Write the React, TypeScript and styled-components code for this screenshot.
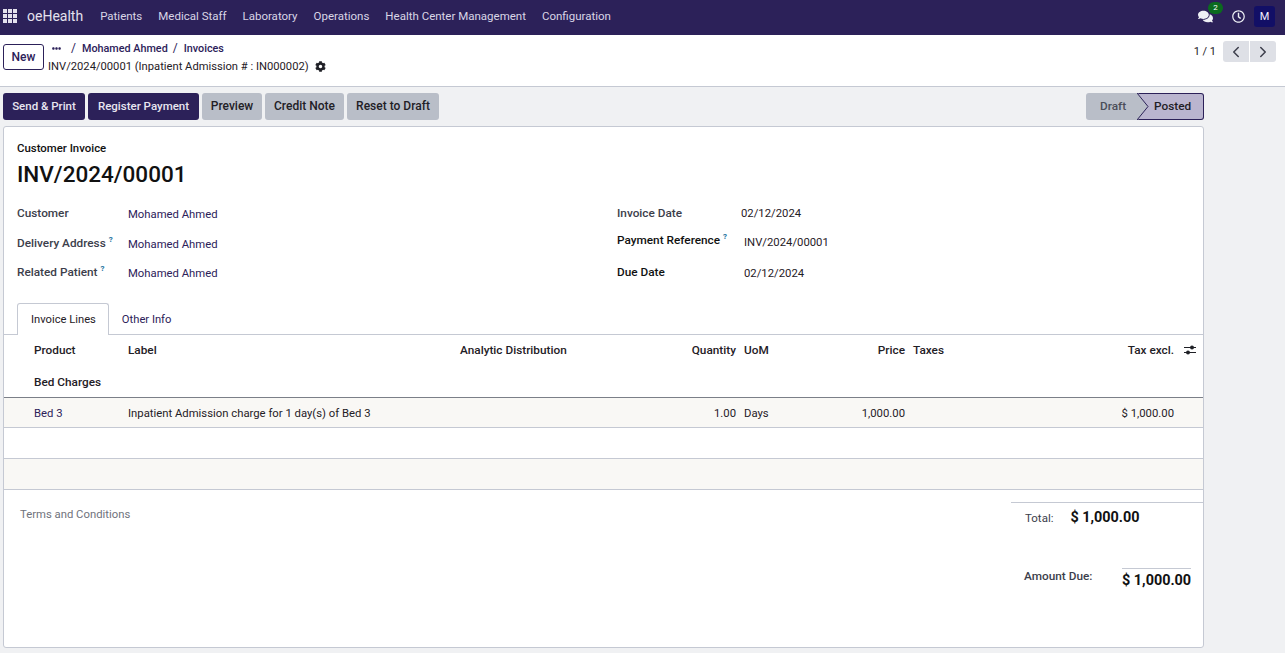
import React from "react";
import styled, { createGlobalStyle } from "styled-components";
import { LuChevronLeft, LuChevronRight } from "react-icons/lu";
import { FaCog, FaComments, FaRegClock, FaEllipsisH } from "react-icons/fa";

const Global = createGlobalStyle`
	html, body {
		margin: 0;
		padding: 0;
		height: 100%;
		overflow: hidden;
		background: #f0f1f3;
		font-family: Roboto, "Noto Sans", sans-serif;
		font-size: 12px;
		color: #1f2026;
	}
`;

const Page = styled.div`
	width: 1285px;
	height: 653px;
	overflow: hidden;
	background: #f0f1f3;
`;

const Navbar = styled.header`
	height: 35px;
	box-sizing: border-box;
	background: #2c2159;
	display: flex;
	align-items: center;
	padding: 0 10px 3px 3px;
	color: #d9d5e6;
`;

const AppsGrid = styled.div`
	width: 15px;
	height: 15px;
	display: grid;
	grid-template-columns: repeat(3, 4px);
	grid-auto-rows: 4px;
	gap: 1px;
	margin-right: 9px;

	span {
		background: #e4e1ee;
	}
`;

const Brand = styled.span`
	font-size: 14px;
	margin-right: 17px;
	color: #e4e1ee;
`;

const NavItem = styled.span`
	font-size: 11.5px;
	margin-right: 16px;
	white-space: nowrap;
`;

const NavRight = styled.div`
	margin-left: auto;
	display: flex;
	align-items: center;
`;

const Messages = styled.div`
	position: relative;
	display: flex;
	color: #eef0f5;
	font-size: 15px;
	margin-top: 1px;
	margin-right: 19px;
`;

const Badge = styled.span`
	position: absolute;
	top: -7px;
	left: 10px;
	width: 15px;
	height: 12px;
	border-radius: 7px;
	background: #0b6b1f;
	color: #fff;
	font-size: 8px;
	line-height: 12px;
	text-align: center;
`;

const Clock = styled.div`
	display: flex;
	color: #eef0f5;
	font-size: 13px;
	margin-right: 9px;
`;

const Avatar = styled.div`
	width: 21px;
	height: 21px;
	margin-top: 1px;
	border-radius: 3px;
	background: #120f66;
	color: #f0f0ff;
	font-size: 11px;
	display: flex;
	align-items: center;
	justify-content: center;
`;

const ControlPanel = styled.div`
	height: 52px;
	box-sizing: border-box;
	background: #fff;
	border-bottom: 1px solid #c5c9d3;
	padding: 6px 9px 0 3px;
	display: flex;
	align-items: flex-start;
`;

const NewButton = styled.button`
	width: 41px;
	height: 26px;
	margin-top: 3px;
	padding: 0;
	box-sizing: border-box;
	background: #fff;
	border: 1px solid #2c2159;
	border-radius: 3px;
	color: #2c2159;
	font: 500 12px Roboto, sans-serif;
`;

const Crumbs = styled.div`
	margin-left: 4px;
	display: flex;
	flex-direction: column;
`;

const CrumbRow = styled.div`
	display: flex;
	align-items: center;
	height: 14px;
	margin-left: 4px;
	font-size: 10.8px;
	font-weight: 500;
	color: #2c2159;
`;

const CrumbSep = styled.span<{ $tight?: boolean }>`
	margin: 0 6px 0 ${(p) => (p.$tight ? "5px" : "10px")};
	font-weight: 400;
	font-size: 12px;
`;

const RecordTitle = styled.div`
	display: flex;
	align-items: center;
	height: 18px;
	margin-top: 2px;
	font-size: 11.2px;
	color: #1f2026;
	white-space: nowrap;

	svg {
		margin-left: 6px;
		font-size: 11px;
	}
`;

const Pager = styled.div`
	margin-left: auto;
	display: flex;
	align-items: center;
	font-size: 11px;
`;

const PagerCount = styled.span`
	margin-right: 7px;
`;

const PagerButton = styled.button<{ $side: "left" | "right" }>`
	width: 26px;
	height: 21px;
	padding: 0;
	border: none;
	background: #dee0e6;
	color: #3c3e4b;
	font-size: 18px;
	display: flex;
	align-items: center;
	justify-content: center;
	border-radius: ${(p) => (p.$side === "left" ? "3px 0 0 3px" : "0 3px 3px 0")};
	margin-left: ${(p) => (p.$side === "right" ? "1px" : "0")};
`;

const ActionBar = styled.div`
	width: 1204px;
	box-sizing: border-box;
	padding: 6px 0 0 3px;
	display: flex;
	align-items: center;
	gap: 3px;
`;

const ActionButton = styled.button<{ $primary?: boolean; $w: number }>`
	width: ${(p) => p.$w}px;
	height: 27px;
	padding: 0 0 1px;
	border: none;
	border-radius: 3px;
	white-space: nowrap;
	font: 500 ${(p) => (p.$primary ? "11.5px" : "12px")} Roboto, sans-serif;
	background: ${(p) => (p.$primary ? "#2c2159" : "#b9bec8")};
	color: ${(p) => (p.$primary ? "#e8e6f0" : "#1f2026")};
`;

const StatusBar = styled.div`
	margin-left: auto;
	display: flex;
	height: 27px;
	font-size: 11.8px;
	font-weight: 500;
`;

const StatusDraft = styled.div`
	width: 52px;
	box-sizing: border-box;
	padding: 0 0 1px 14px;
	display: flex;
	align-items: center;
	background: #b9bec8;
	color: #4b4e5a;
	border-radius: 3px 0 0 3px;
`;

const StatusPosted = styled.div`
	position: relative;
	width: 66px;
	box-sizing: border-box;
	padding: 0 0 1px 16px;
	display: flex;
	align-items: center;
	background: #bab5cf;
	color: #1f2026;
	border: 1px solid #2c2159;
	border-left: none;
	border-radius: 0 3px 3px 0;

	svg {
		position: absolute;
		left: -1px;
		top: -1px;
	}
`;

const Sheet = styled.main`
	width: 1201px;
	height: 522px;
	margin: 6px 0 0 3px;
	box-sizing: border-box;
	background: #fff;
	border: 1px solid #c5c9d3;
	border-radius: 3px;
	display: flex;
	flex-direction: column;
`;

const SheetHead = styled.div`
	padding: 14px 12px 0 13px;
`;

const DocType = styled.div`
	font-size: 11.4px;
	font-weight: 500;
	line-height: 15px;
	color: #111;
`;

const DocName = styled.h1`
	margin: 3px 0 0;
	font-size: 22.5px;
	line-height: 31px;
	font-weight: 500;
	color: #111;
`;

const FormGrid = styled.div`
	display: grid;
	grid-template-columns: 600px 1fr;
	margin-top: 16px;
`;

const FormColumn = styled.div`
	display: flex;
	flex-direction: column;
`;

const FieldRow = styled.div`
	height: 29.5px;
	display: flex;
	align-items: flex-start;
`;

const FieldLabel = styled.div<{ $w: number; $strong?: boolean; $lift?: number }>`
	width: ${(p) => p.$w}px;
	flex: none;
	margin-top: ${(p) => -(p.$lift ?? 0)}px;
	font-size: 11.8px;
	line-height: 15px;
	font-weight: 500;
	color: ${(p) => (p.$strong ? "#111" : "#3c3e4b")};

	sup {
		color: #17709c;
		font-size: 8px;
		font-weight: 700;
		line-height: 0;
		margin-left: 3px;
	}
`;

const FieldValue = styled.div<{ $link?: boolean; $drop?: number }>`
	margin-top: ${(p) => p.$drop ?? 0}px;
	font-size: 11.3px;
	line-height: 16px;
	color: ${(p) => (p.$link ? "#2c2159" : "#1f2026")};
`;

const Tabs = styled.div`
	display: flex;
	height: 32px;
	box-sizing: border-box;
	margin-top: 8px;
	padding-left: 13px;
	border-bottom: 1px solid #c5c9d3;
`;

const Tab = styled.div<{ $active?: boolean }>`
	height: 32px;
	box-sizing: border-box;
	padding: 1px 12px 0 ${(p) => (p.$active ? "13px" : "12px")};
	display: flex;
	align-items: center;
	font-size: 11.2px;
	color: ${(p) => (p.$active ? "#1f2026" : "#2c2159")};
	background: ${(p) => (p.$active ? "#fff" : "transparent")};
	border: 1px solid ${(p) => (p.$active ? "#c5c9d3" : "transparent")};
	border-bottom: none;
	border-radius: 3px 3px 0 0;
`;

const Lines = styled.table`
	width: 100%;
	border-collapse: collapse;
	table-layout: fixed;
	font-size: 11.3px;
`;

const Th = styled.th<{ $w: number; $right?: boolean }>`
	width: ${(p) => p.$w}px;
	box-sizing: border-box;
	height: 30px;
	padding: 0 4px;
	font-size: 11.8px;
	font-weight: 500;
	color: #1f2026;
	white-space: nowrap;
	text-align: ${(p) => (p.$right ? "right" : "left")};

	svg {
		display: block;
		margin-left: 2px;
	}
`;

const Td = styled.td<{ $right?: boolean; $link?: boolean }>`
	padding: 1px 4px 0;
	white-space: nowrap;
	text-align: ${(p) => (p.$right ? "right" : "left")};
	color: ${(p) => (p.$link ? "#2c2159" : "#1f2026")};
`;

const SectionRow = styled.tr`
	height: 33px;
	border-bottom: 1px solid #7b7f88;

	td {
		font-size: 11.8px;
		font-weight: 500;
		padding-top: 3px;
	}
`;

const BodyRow = styled.tr<{ $shade?: boolean; $h: number }>`
	height: ${(p) => p.$h}px;
	border-bottom: 1px solid #c5c9d3;
	background: ${(p) => (p.$shade ? "#f9f8f5" : "#fff")};
`;

const Footer = styled.div`
	display: flex;
	justify-content: space-between;
	margin-top: 12px;
`;

const Terms = styled.div`
	margin: 5px 0 0 16px;
	font-size: 11.3px;
	line-height: 16px;
	color: #6f727c;
`;

const Totals = styled.div`
	width: 192px;
	box-sizing: border-box;
	border-top: 1px solid #c5c9d3;
	padding: 5px 12px 0 13px;
`;

const TotalRow = styled.div`
	display: flex;
	align-items: center;
	height: 19px;
	padding-left: 1px;
	font-size: 11.5px;
	color: #3c3e4b;

	strong {
		margin-left: 17px;
		font-size: 14.4px;
		font-weight: 700;
		color: #111;
	}
`;

const DueRow = styled.div`
	display: flex;
	justify-content: space-between;
	margin-top: 41px;
`;

const DueLabel = styled.div`
	font-size: 11.8px;
	font-weight: 500;
	line-height: 16px;
	color: #3c3e4b;
`;

const DueValue = styled.div`
	width: 69px;
	box-sizing: border-box;
	border-top: 1px solid #c5c9d3;
	padding-top: 1px;
	font-size: 14.4px;
	line-height: 21px;
	font-weight: 700;
	color: #111;
	white-space: nowrap;
`;

const navItems = [
	"Patients",
	"Medical Staff",
	"Laboratory",
	"Operations",
	"Health Center Management",
	"Configuration",
];

const App = () => {
	return (
		<Page>
			<Global />
			<Navbar>
				<AppsGrid>
					{Array.from({ length: 9 }).map((_, i) => (
						<span key={i} />
					))}
				</AppsGrid>
				<Brand>oeHealth</Brand>
				{navItems.map((item) => (
					<NavItem key={item}>{item}</NavItem>
				))}
				<NavRight>
					<Messages>
						<FaComments />
						<Badge>2</Badge>
					</Messages>
					<Clock>
						<FaRegClock />
					</Clock>
					<Avatar>M</Avatar>
				</NavRight>
			</Navbar>

			<ControlPanel>
				<NewButton>New</NewButton>
				<Crumbs>
					<CrumbRow>
						<FaEllipsisH size={9} />
						<CrumbSep>/</CrumbSep>
						Mohamed Ahmed
						<CrumbSep $tight>/</CrumbSep>
						Invoices
					</CrumbRow>
					<RecordTitle>
						INV/2024/00001 (Inpatient Admission # : IN000002)
						<FaCog />
					</RecordTitle>
				</Crumbs>
				<Pager>
					<PagerCount>1 / 1</PagerCount>
					<PagerButton $side="left">
						<LuChevronLeft />
					</PagerButton>
					<PagerButton $side="right">
						<LuChevronRight />
					</PagerButton>
				</Pager>
			</ControlPanel>

			<ActionBar>
				<ActionButton $primary $w={82}>
					Send &amp; Print
				</ActionButton>
				<ActionButton $primary $w={111}>
					Register Payment
				</ActionButton>
				<ActionButton $w={60}>Preview</ActionButton>
				<ActionButton $w={79}>Credit Note</ActionButton>
				<ActionButton $w={92}>Reset to Draft</ActionButton>
				<StatusBar>
					<StatusDraft>Draft</StatusDraft>
					<StatusPosted>
						<svg width="12" height="27" viewBox="0 0 12 27">
							<path d="M0 0 L1 0 L11 13.5 L1 27 L0 27 Z" fill="#b9bec8" />
							<path d="M0 0 L11 13.5 L0 27" fill="none" stroke="#2c2159" />
						</svg>
						Posted
					</StatusPosted>
				</StatusBar>
			</ActionBar>

			<Sheet>
				<SheetHead>
					<DocType>Customer Invoice</DocType>
					<DocName>INV/2024/00001</DocName>
					<FormGrid>
						<FormColumn>
							<FieldRow>
								<FieldLabel $w={111}>Customer</FieldLabel>
								<FieldValue $link $drop={1}>
									Mohamed Ahmed
								</FieldValue>
							</FieldRow>
							<FieldRow>
								<FieldLabel $w={111}>
									Delivery Address<sup>?</sup>
								</FieldLabel>
								<FieldValue $link $drop={1}>
									Mohamed Ahmed
								</FieldValue>
							</FieldRow>
							<FieldRow>
								<FieldLabel $w={111}>
									Related Patient<sup>?</sup>
								</FieldLabel>
								<FieldValue $link $drop={1}>
									Mohamed Ahmed
								</FieldValue>
							</FieldRow>
						</FormColumn>
						<FormColumn>
							<FieldRow>
								<FieldLabel $w={124}>Invoice Date</FieldLabel>
								<FieldValue>02/12/2024</FieldValue>
							</FieldRow>
							<FieldRow>
								<FieldLabel $w={127} $strong $lift={3}>
									Payment Reference<sup>?</sup>
								</FieldLabel>
								<FieldValue $drop={-1}>INV/2024/00001</FieldValue>
							</FieldRow>
							<FieldRow>
								<FieldLabel $w={127} $strong>
									Due Date
								</FieldLabel>
								<FieldValue $drop={1}>02/12/2024</FieldValue>
							</FieldRow>
						</FormColumn>
					</FormGrid>
				</SheetHead>

				<Tabs>
					<Tab $active>Invoice Lines</Tab>
					<Tab>Other Info</Tab>
				</Tabs>

				<Lines>
					<thead>
						<tr>
							<Th $w={26} />
							<Th $w={94}>Product</Th>
							<Th $w={332}>Label</Th>
							<Th $w={130}>Analytic Distribution</Th>
							<Th $w={154} $right>
								Quantity
							</Th>
							<Th $w={50}>UoM</Th>
							<Th $w={119} $right>
								Price
							</Th>
							<Th $w={72}>Taxes</Th>
							<Th $w={197} $right>
								Tax excl.
							</Th>
							<Th $w={25}>
								<svg width="12" height="10" viewBox="0 0 12 10">
									<path d="M0 2.5H12M0 7.5H12" stroke="#1f2026" strokeWidth="1" />
									<circle cx="8" cy="2.5" r="2" fill="#1f2026" />
									<circle cx="4" cy="7.5" r="2" fill="#1f2026" />
								</svg>
							</Th>
						</tr>
					</thead>
					<tbody>
						<SectionRow>
							<Td />
							<Td colSpan={9}>Bed Charges</Td>
						</SectionRow>
						<BodyRow $shade $h={30}>
							<Td />
							<Td $link>Bed 3</Td>
							<Td colSpan={2}>Inpatient Admission charge for 1 day(s) of Bed 3</Td>
							<Td $right>1.00</Td>
							<Td>Days</Td>
							<Td $right>1,000.00</Td>
							<Td />
							<Td $right>$ 1,000.00</Td>
							<Td />
						</BodyRow>
						<BodyRow $h={31}>
							<Td colSpan={10} />
						</BodyRow>
						<BodyRow $shade $h={31}>
							<Td colSpan={10} />
						</BodyRow>
					</tbody>
				</Lines>

				<Footer>
					<Terms>Terms and Conditions</Terms>
					<Totals>
						<TotalRow>
							Total:
							<strong>$ 1,000.00</strong>
						</TotalRow>
						<DueRow>
							<DueLabel>Amount Due:</DueLabel>
							<DueValue>$ 1,000.00</DueValue>
						</DueRow>
					</Totals>
				</Footer>
			</Sheet>
		</Page>
	);
};

export default App;
